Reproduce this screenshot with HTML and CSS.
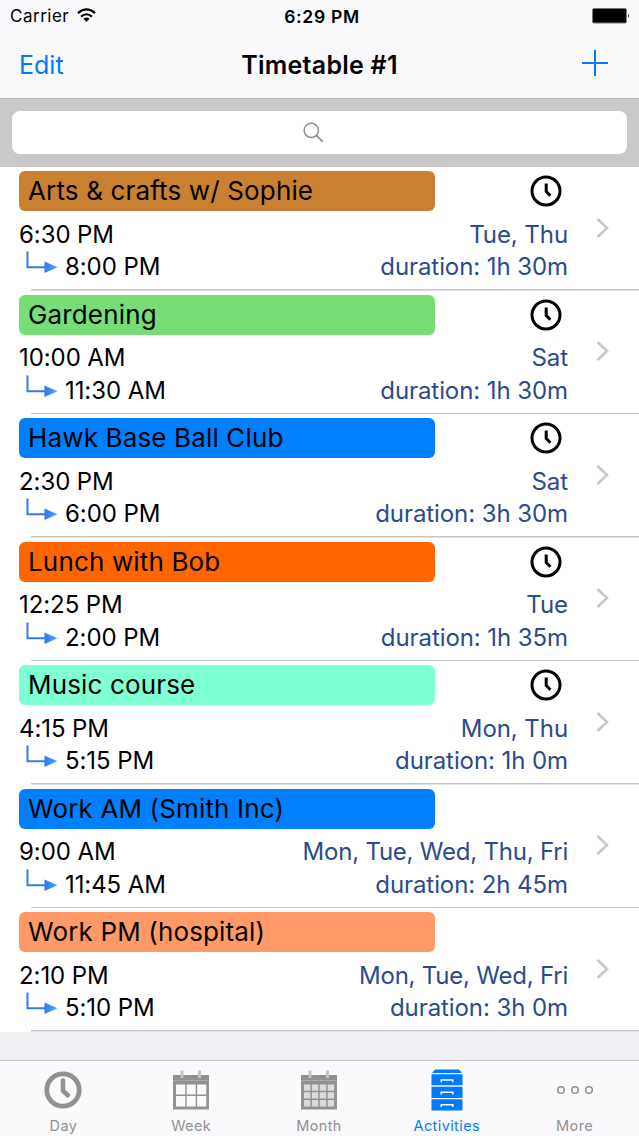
FILE: index.html
```html
<!DOCTYPE html>
<html lang="en">
<head>
    <meta charset="UTF-8">
    <meta name="viewport" content="width=device-width, initial-scale=1.0">
    <title>Timetable #1</title>
    <link rel="stylesheet" href="styles.css">
</head>
<body>
    <!-- Shared icons -->
    <svg class="sprite" aria-hidden="true">
        <linearGradient id="arrow-fill" x1="0" x2="1">
            <stop offset="0" stop-color="#2f78ee"/>
            <stop offset="1" stop-color="#55a5ff"/>
        </linearGradient>
        <symbol id="clock" viewBox="0 0 32 32">
            <circle cx="16" cy="16" r="14" fill="none" stroke="#000" stroke-width="3"/>
            <path d="M16.2 8.5v8l4.2 4.3" fill="none" stroke="#000" stroke-width="3"/>
        </symbol>
        <symbol id="arrow" viewBox="0 0 32 22">
            <path d="M1.5 0.5v15.7h18" fill="none" stroke="#2f7df0" stroke-width="2"/>
            <path d="M18.5 10.5L31.5 16.2L18.5 22z" fill="url(#arrow-fill)"/>
        </symbol>
        <symbol id="chevron" viewBox="0 0 13 20">
            <path d="M1.5 1L11 10L1.5 19" fill="none" stroke="#c7c7cc" stroke-width="2.6"/>
        </symbol>
    </svg>

    <div class="app">
        <header class="header">
            <div class="status-bar">
                <div class="carrier">
                    <span>Carrier</span>
                    <svg class="wifi" viewBox="0 0 20 15">
                        <path d="M1 5Q10 -2.8 19 5M4.2 8.7Q10 3.6 15.8 8.7" fill="none" stroke="#000" stroke-width="2.2"/>
                        <path d="M6.8 11Q10 8.4 13.2 11L10 14.4z"/>
                    </svg>
                </div>
                <div class="status-time">6:29 PM</div>
                <svg class="battery" viewBox="0 0 38 16">
                    <rect x="0.5" y="0.5" width="34" height="14.5" rx="1.5" fill="#000" stroke="#777"/>
                    <path d="M36 5.2q1.8 2.5 0 5z"/>
                </svg>
            </div>
            <div class="nav-bar">
                <a class="edit">Edit</a>
                <h1>Timetable #1</h1>
                <svg class="plus" viewBox="0 0 26 26">
                    <path d="M13 0v26M0 13h26" stroke="#007aff" stroke-width="2"/>
                </svg>
            </div>
        </header>

        <div class="search">
            <div class="search-field">
                <svg class="magnifier" viewBox="0 0 22 22">
                    <circle cx="8.7" cy="8.7" r="7.5" fill="none" stroke="#8e8e93" stroke-width="1.6"/>
                    <path d="M14 14L20.5 20.5" stroke="#8e8e93" stroke-width="2"/>
                </svg>
            </div>
        </div>

        <main class="list">
            <div class="row">
                <div class="row-body">
                    <div class="row-top">
                        <div class="name brown">Arts &amp; crafts w/ Sophie</div>
                        <svg class="clock"><use href="#clock"/></svg>
                    </div>
                    <div class="line"><span>6:30 PM</span><span class="info">Tue, Thu</span></div>
                    <div class="line end"><span><svg class="arrow"><use href="#arrow"/></svg>8:00 PM</span><span class="info">duration: 1h 30m</span></div>
                </div>
                <svg class="chevron"><use href="#chevron"/></svg>
            </div>
            <div class="row">
                <div class="row-body">
                    <div class="row-top">
                        <div class="name green">Gardening</div>
                        <svg class="clock"><use href="#clock"/></svg>
                    </div>
                    <div class="line"><span>10:00 AM</span><span class="info">Sat</span></div>
                    <div class="line end"><span><svg class="arrow"><use href="#arrow"/></svg>11:30 AM</span><span class="info">duration: 1h 30m</span></div>
                </div>
                <svg class="chevron"><use href="#chevron"/></svg>
            </div>
            <div class="row">
                <div class="row-body">
                    <div class="row-top">
                        <div class="name blue">Hawk Base Ball Club</div>
                        <svg class="clock"><use href="#clock"/></svg>
                    </div>
                    <div class="line"><span>2:30 PM</span><span class="info">Sat</span></div>
                    <div class="line end"><span><svg class="arrow"><use href="#arrow"/></svg>6:00 PM</span><span class="info">duration: 3h 30m</span></div>
                </div>
                <svg class="chevron"><use href="#chevron"/></svg>
            </div>
            <div class="row">
                <div class="row-body">
                    <div class="row-top">
                        <div class="name orange">Lunch with Bob</div>
                        <svg class="clock"><use href="#clock"/></svg>
                    </div>
                    <div class="line"><span>12:25 PM</span><span class="info">Tue</span></div>
                    <div class="line end"><span><svg class="arrow"><use href="#arrow"/></svg>2:00 PM</span><span class="info">duration: 1h 35m</span></div>
                </div>
                <svg class="chevron"><use href="#chevron"/></svg>
            </div>
            <div class="row">
                <div class="row-body">
                    <div class="row-top">
                        <div class="name aqua">Music course</div>
                        <svg class="clock"><use href="#clock"/></svg>
                    </div>
                    <div class="line"><span>4:15 PM</span><span class="info">Mon, Thu</span></div>
                    <div class="line end"><span><svg class="arrow"><use href="#arrow"/></svg>5:15 PM</span><span class="info">duration: 1h 0m</span></div>
                </div>
                <svg class="chevron"><use href="#chevron"/></svg>
            </div>
            <div class="row">
                <div class="row-body">
                    <div class="row-top">
                        <div class="name blue">Work AM (Smith Inc)</div>
                    </div>
                    <div class="line"><span>9:00 AM</span><span class="info days">Mon, Tue, Wed, Thu, Fri</span></div>
                    <div class="line end"><span><svg class="arrow"><use href="#arrow"/></svg>11:45 AM</span><span class="info">duration: 2h 45m</span></div>
                </div>
                <svg class="chevron"><use href="#chevron"/></svg>
            </div>
            <div class="row">
                <div class="row-body">
                    <div class="row-top">
                        <div class="name salmon">Work PM (hospital)</div>
                    </div>
                    <div class="line"><span>2:10 PM</span><span class="info days">Mon, Tue, Wed, Fri</span></div>
                    <div class="line end"><span><svg class="arrow"><use href="#arrow"/></svg>5:10 PM</span><span class="info">duration: 3h 0m</span></div>
                </div>
                <svg class="chevron"><use href="#chevron"/></svg>
            </div>
        </main>

        <nav class="tab-bar">
            <a class="tab">
                <svg viewBox="0 0 40 44">
                    <circle cx="20" cy="22" r="16.2" fill="none" stroke="#929292" stroke-width="4.8"/>
                    <path d="M20 12.5v10.3l4.8 4.5" fill="none" stroke="#929292" stroke-width="4.6" stroke-linecap="round" stroke-linejoin="round"/>
                </svg>
                <span>Day</span>
            </a>
            <a class="tab">
                <svg viewBox="0 0 40 44">
                    <rect x="2" y="7" width="36" height="34.5" fill="#929292"/>
                    <path d="M2 12.5h36" stroke="#a9a9a9"/>
                    <path d="M5 16.5h9.3v10H5zM15.7 16.5h9v10h-9zM26.1 16.5h9.2v10h-9.2zM5 28h9.3v10.5H5zM15.7 28h9v10.5h-9zM26.1 28h9.2v10.5h-9.2z" fill="#fbf9fb"/>
                    <path d="M11 2.5v7.5M28.5 2.5v7.5" stroke="#c4c4c4" stroke-width="3"/>
                </svg>
                <span>Week</span>
            </a>
            <a class="tab">
                <svg viewBox="0 0 40 44">
                    <rect x="2" y="7" width="36" height="34.5" fill="#929292"/>
                    <path d="M2 12.5h36" stroke="#a9a9a9"/>
                    <path d="M5 16.5h6.4v6.3H5zM12.9 16.5h6.4v6.3h-6.4zM20.8 16.5h6.4v6.3h-6.4zM28.7 16.5h6.4v6.3h-6.4zM5 24.3h6.4v6.3H5zM12.9 24.3h6.4v6.3h-6.4zM20.8 24.3h6.4v6.3h-6.4zM28.7 24.3h6.4v6.3h-6.4zM5 32.1h6.4v6.3H5zM12.9 32.1h6.4v6.3h-6.4zM20.8 32.1h6.4v6.3h-6.4zM28.7 32.1h6.4v6.3h-6.4z" fill="#dcdbdc"/>
                    <path d="M11 2.5v7.5M28.5 2.5v7.5" stroke="#c4c4c4" stroke-width="3"/>
                </svg>
                <span>Month</span>
            </a>
            <a class="tab active">
                <svg viewBox="0 0 40 44">
                    <path d="M8 1.5h24l3 3.5H5zM4.5 6.3h31v11h-31zM4.5 18.8h31v11.2h-31zM4.5 31.3h31v11.2h-31z" fill="#007aff"/>
                    <path d="M14.2 14.3v-2.3h11.6v2.3M14.2 26.6v-2.3h11.6v2.3M14.2 39v-2.3h11.6v2.3" fill="none" stroke="#fff" stroke-width="1.5"/>
                </svg>
                <span>Activities</span>
            </a>
            <a class="tab">
                <svg viewBox="0 0 40 44">
                    <g fill="none" stroke="#929292" stroke-width="1.5">
                        <circle cx="6" cy="22" r="3.3"/>
                        <circle cx="20" cy="22" r="3.3"/>
                        <circle cx="34" cy="22" r="3.3"/>
                    </g>
                </svg>
                <span>More</span>
            </a>
        </nav>
    </div>
</body>
</html>
```
FILE: styles.css
```css
* {
    box-sizing: border-box;
}

body {
    margin: 0;
    font-family: Inter, "Liberation Sans", sans-serif;
    color: #000;
    background: #efeef3;
}

svg {
    display: block;
    flex: none;
}

.sprite {
    position: absolute;
    width: 0;
    height: 0;
}

.app {
    display: flex;
    flex-direction: column;
    width: 639px;
    height: 1136px;
    overflow: hidden;
}

.header {
    height: 99px;
    background: #f9f8fb;
    border-bottom: 1px solid #b2b1b4;
}

.status-bar,
.nav-bar {
    display: grid;
    grid-template-columns: 1fr auto 1fr;
    align-items: center;
}

.status-bar {
    height: 32px;
    padding: 0 9px 0 10px;
    font-size: 17px;
}

.carrier {
    display: flex;
    align-items: center;
    gap: 8px;
    letter-spacing: 0.5px;
}

.wifi {
    width: 19px;
    height: 15px;
    margin-top: -2px;
}

.status-time {
    font-weight: 600;
    font-size: 17.5px;
    letter-spacing: 0.7px;
    padding-left: 4px;
}

.battery {
    justify-self: end;
    width: 38px;
    height: 16px;
}

.nav-bar {
    height: 66px;
    padding: 0 31px 0 19px;
}

.edit {
    font-size: 25px;
    color: #007aff;
}

.nav-bar h1 {
    margin: 0;
    padding-left: 12px;
    font-size: 25px;
    font-weight: 600;
    letter-spacing: 0.25px;
}

.plus {
    justify-self: end;
    width: 26px;
    height: 26px;
    margin-top: -4px;
}

.search {
    height: 68px;
    padding: 12px 12px 13px;
    background: #c9c8cb;
}

.search-field {
    display: flex;
    align-items: center;
    justify-content: center;
    height: 43px;
    padding-right: 12px;
    border-radius: 8px;
    background: #fff;
}

.magnifier {
    width: 21px;
    height: 21px;
}

.list {
    background: #fff;
}

.row {
    display: flex;
    align-items: center;
    height: 123.5px;
    padding-left: 19px;
    background: linear-gradient(#c5c4c8, #c5c4c8) 31px 100% / 100% 1.5px no-repeat;
}

.row-body {
    width: 549px;
    height: 100%;
    padding-top: 4px;
}

.row-top {
    display: flex;
    align-items: center;
    justify-content: space-between;
    height: 40px;
    padding-right: 6px;
}

.name {
    width: 416px;
    height: 40px;
    padding-left: 9px;
    border-radius: 6px;
    font-size: 26px;
    line-height: 40px;
    letter-spacing: 0.15px;
    white-space: nowrap;
}

.brown { background: #ca8031; }
.green { background: #77dd77; }
.blue { background: #007fff; }
.orange { background: #ff6600; }
.aqua { background: #7fffd4; }
.salmon { background: #ff9966; }

.clock {
    width: 32px;
    height: 32px;
}

.line {
    display: flex;
    justify-content: space-between;
    height: 32.5px;
    margin-top: 7.5px;
    font-size: 24px;
    line-height: 32px;
    letter-spacing: -0.08px;
    white-space: nowrap;
}

.line.end {
    margin-top: 0;
}

.line.end span:first-child {
    display: flex;
    gap: 7px;
    padding-left: 7px;
}

.arrow {
    width: 32px;
    height: 22px;
}

.info {
    color: #2c4a8c;
}

.days {
    letter-spacing: -0.22px;
}

.chevron {
    width: 13px;
    height: 20px;
    margin: -2px 0 0 28px;
}

.tab-bar {
    display: grid;
    grid-template-columns: repeat(5, 127.8px);
    height: 76px;
    margin: auto 0 0 -0.5px;
    background: #faf9fb;
    border-top: 1px solid #c9c8cc;
}

.tab {
    display: flex;
    flex-direction: column;
    align-items: center;
    padding-top: 6.5px;
    font-size: 14.5px;
    line-height: 20px;
    color: #929292;
}

.tab svg {
    width: 40px;
    height: 44px;
}

.tab span {
    margin-top: 4px;
    letter-spacing: 0.4px;
}

.tab.active {
    color: #007aff;
}
```
